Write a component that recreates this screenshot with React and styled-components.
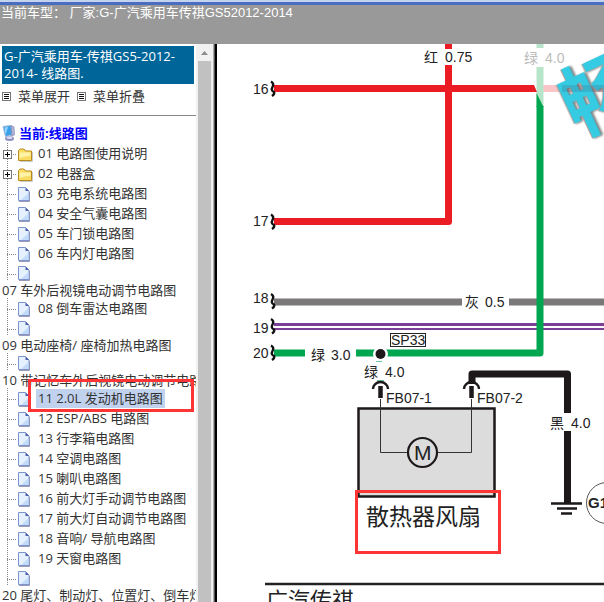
import { useState } from 'react';
import styled, { createGlobalStyle } from 'styled-components';

const uiFont = '"Open Sans", "Noto Sans CJK SC", sans-serif';
const arialFont = '"Liberation Sans", "Noto Sans CJK SC", sans-serif';

const menu = [
  { text: '01 电路图使用说明', folder: true },
  { text: '02 电器盒', folder: true },
  { text: '03 充电系统电路图' },
  { text: '04 安全气囊电路图' },
  { text: '05 车门锁电路图' },
  { text: '06 车内灯电路图' },
  { text: '07 车外后视镜电动调节电路图', wrapped: true },
  { text: '08 倒车雷达电路图' },
  { text: '09 电动座椅/ 座椅加热电路图', wrapped: true },
  { text: '10 带记忆车外后视镜电动调节电路图', wrapped: true },
  { text: '11 2.0L 发动机电路图', marked: true },
  { text: '12 ESP/ABS 电路图' },
  { text: '13 行李箱电路图' },
  { text: '14 空调电路图' },
  { text: '15 喇叭电路图' },
  { text: '16 前大灯手动调节电路图' },
  { text: '17 前大灯自动调节电路图' },
  { text: '18 音响/ 导航电路图' },
  { text: '19 天窗电路图' },
  { text: '20 尾灯、制动灯、位置灯、倒车灯电路图', wrapped: true },
];

export default function App() {
  const [selected, setSelected] = useState(10);

  return (
    <Page>
      <GlobalStyle />
      <TopBar>当前车型： 厂家:G-广汽乘用车传祺GS52012-2014</TopBar>
      <Frames>
        <Sidebar>
          <Title>G-广汽乘用车-传祺GS5-2012-2014- 线路图.</Title>
          <Tools>
            <ListIcon />
            <ToolButton type="button">菜单展开</ToolButton>
            <ListIcon />
            <ToolButton type="button">菜单折叠</ToolButton>
          </Tools>
          <Root>
            <ComputerIcon />
            <span>当前:线路图</span>
          </Root>
          <Tree>
            {menu.map((item, i) => (
              <Item key={item.text}>
                <Branch $short={item.wrapped}>
                  {item.folder && <Expand type="button" aria-label={'展开 ' + item.text}><PlusIcon /></Expand>}
                </Branch>
                {item.folder ? <FolderIcon /> : <PageIcon />}
                <ItemLink
                  href={'#' + (i + 1)}
                  $wrapped={item.wrapped}
                  $selected={selected === i}
                  onClick={() => setSelected(i)}
                >
                  {item.text}
                </ItemLink>
                {item.marked && <Mark />}
              </Item>
            ))}
          </Tree>
        </Sidebar>
        <ScrollBar>
          <svg width="7" height="4" viewBox="0 0 7 4"><path d="M0 4 3.5 0 7 4z" fill="#8b8b8b" /></svg>
          <Thumb />
        </ScrollBar>
        <Divider />
        <Main>
          <Diagram />
        </Main>
      </Frames>
    </Page>
  );
}

function ListIcon() {
  return (
    <svg width="9" height="9" viewBox="0 0 9 9" shapeRendering="crispEdges">
      <rect x=".5" y=".5" width="8" height="8" fill="#fff" stroke="#777" />
      <path d="M2 2.5h5M2 4.5h5M2 6.5h5" stroke="#111" />
    </svg>
  );
}

function PlusIcon() {
  return (
    <svg width="9" height="9" viewBox="0 0 9 9" shapeRendering="crispEdges">
      <rect x=".5" y=".5" width="8" height="8" fill="#fff" stroke="#777" />
      <path d="M2 4.5h5M4.5 2v5" stroke="#000" />
    </svg>
  );
}

function ComputerIcon() {
  return (
    <svg width="16" height="18" viewBox="0 0 16 18">
      <ellipse cx="8.5" cy="14.5" rx="4.5" ry="2.5" fill="#8d8fc0" />
      <ellipse cx="8.5" cy="13.7" rx="3" ry="1.4" fill="#dcdcf0" />
      <path d="M2 2.5 10 1.5 11 11 4.5 12.5z" fill="#3aa0e8" stroke="#9db6d8" />
      <path d="M3.4 3.6 7 3 5 9.8 4.4 10z" fill="#8fd4ff" />
      <path d="M10 1.5 13 3 13.5 10.8 11 12z" fill="#b5b8d8" stroke="#7276a8" strokeWidth=".6" />
    </svg>
  );
}

function FolderIcon() {
  return (
    <svg width="18" height="18" viewBox="0 0 18 18">
      <path d="M3 17.5h12.500V8" fill="none" stroke="#c9c9c9" />
      <path d="M1.500 16.500V6.500L3 5h4l1.500 2h6v9.500z" fill="#fbdc62" stroke="#b98a1e" />
      <path d="M2.500 8.500h11v3.500q-6 0-11 2z" fill="#fff3a8" />
    </svg>
  );
}

function PageIcon() {
  return (
    <svg width="18" height="18" viewBox="0 0 18 18">
      <path d="M2 17.500h10.500V8" fill="none" stroke="#9a9ab4" />
      <path d="M1.500 3.500h7l3.500 3.500v9.500H1.500z" fill="#e6f1ff" stroke="#7d93cf" />
      <path d="M11.500 9v7H4z" fill="#c3dbfb" />
      <path d="M8.500 3.500V7H12z" fill="#4d62ad" />
    </svg>
  );
}

function Break({ y }) {
  return <path d={`M271 ${y - 7}q3.500 2 1.500 5.500t1.500 5q1 2-2 4`} fill="none" stroke="#111" strokeWidth="2.400" />;
}

function Connector({ x }) {
  return (
    <>
      <path d={`M${x - 7.5} 389a7.500 7 0 0 1 15 0`} fill="none" stroke="#1d191a" strokeWidth="2.400" />
      <path d={`M${x} 386v12`} stroke="#1d191a" strokeWidth="4.500" />
    </>
  );
}

// wiring of the radiator fan, in sheet coordinates
function Diagram() {
  return (
    <Sheet viewBox="217 44 387 558" preserveAspectRatio="xMinYMin slice" role="img" aria-label="散热器风扇电路图">
      <g fill="none" strokeWidth="7">
        <path d="M543 88.500h61" stroke="#fbc4c6" />
        <path d="M540 44v4M540 67v40" stroke="#b7e5ca" />
        <path d="M274 85H534l3 7H274z" fill="#ec1c24" stroke="none" />
        <path d="M448.500 44v5M448.500 65v156.500H274" stroke="#ec1c24" strokeLinejoin="round" />
        <path d="M274 302h188M509 302h95" stroke="#7b7879" />
        <path d="M274 324.500h330" stroke="#7b3f98" strokeWidth="3" />
        <path d="M274 329h330" stroke="#7b3f98" strokeWidth="2" />
        <path d="M540 106v247H356M305 353h-31" stroke="#00a650" strokeLinejoin="round" />
        <path d="M536.500 93 543.500 107H536.500z" fill="#00a650" stroke="none" />
        <path d="M472 384v-10h95.500v39M567.500 431v72" stroke="#1d191a" strokeLinejoin="round" />
      </g>
      <Break y={88.5} />
      <Break y={221.5} />
      <Break y={301} />
      <Break y={326} />
      <Break y={352.5} />
      <circle cx="380.500" cy="354" r="7.500" fill="#fff" />
      <circle cx="380.500" cy="354" r="5" fill="#1d191a" />
      <path d="M376 361.500h6M377 380.500h7" stroke="#6fc3a0" />
      <rect x="358.500" y="408.500" width="136" height="88" fill="#dcdcdc" stroke="#1d191a" strokeWidth="2.500" />
      <path d="M380.500 399v53.500h91V399" fill="none" stroke="#333" />
      <circle cx="422.500" cy="452.500" r="14.500" fill="#dcdcdc" stroke="#1d191a" strokeWidth="2.200" />
      <Connector x={380.5} />
      <Connector x={471.5} />
      <path d="M551 503.500h31M557 508.500h20M561 513.500h11" stroke="#1d191a" strokeWidth="2.500" />
      <circle cx="607" cy="503" r="20.500" fill="none" stroke="#555" />
      <rect x="390.500" y="333.500" width="35" height="13" fill="#fff" stroke="#222" />
      <path d="M265 584h339" stroke="#222" strokeWidth="2.500" />
      <Label x="253" y="94">16</Label>
      <Label x="253" y="226">17</Label>
      <Label x="253" y="303">18</Label>
      <Label x="253" y="333">19</Label>
      <Label x="253" y="358">20</Label>
      <Label x="424" y="62">红</Label>
      <Label x="445" y="62">0.75</Label>
      <Label x="524" y="63" $faded>绿</Label>
      <Label x="545" y="63" $faded>4.0</Label>
      <Label x="465" y="307">灰</Label>
      <Label x="485" y="307">0.5</Label>
      <Label x="311" y="360">绿</Label>
      <Label x="331" y="360">3.0</Label>
      <Label x="364" y="377">绿</Label>
      <Label x="385" y="377">4.0</Label>
      <Label x="550" y="428">黑</Label>
      <Label x="571" y="428">4.0</Label>
      <Label x="391" y="345">SP33</Label>
      <Label x="386" y="403">FB07-1</Label>
      <Label x="477" y="403">FB07-2</Label>
      <Label x="414" y="460" $size={21}>M</Label>
      <Label x="588" y="508" $size={15} $bold>G1</Label>
      <Label x="366" y="525" $size={23}>散热器风扇</Label>
      <Label x="266" y="608" $size={22}>广汽传祺</Label>
      <Watermark x="577" y="137" transform="rotate(-25 577 137)">畅</Watermark>
      <path d="M562 88.500h42" stroke="#44506a" strokeOpacity=".2" strokeWidth="7" />
      <rect x="356.500" y="491.500" width="143" height="61" fill="none" stroke="#ff3535" strokeWidth="3" />
    </Sheet>
  );
}

const GlobalStyle = createGlobalStyle`
  body {
    margin: 0;
    background: #fff;
  }

  * {
    box-sizing: border-box;
  }
`;

const Page = styled.div`
  display: flex;
  flex-direction: column;
  height: 100vh;
  overflow: hidden;
`;

const TopBar = styled.header`
  flex: none;
  height: 44px;
  padding: 5px 0 0 1px;
  background: linear-gradient(#c4d4ee 0 2px, #4a6dc0 2px 5px, #999 5px);
  color: #fff;
  font: 13px/16px ${arialFont};
  white-space: nowrap;
`;

const Frames = styled.div`
  display: flex;
  flex: 1;
  min-height: 0;
`;

const Sidebar = styled.nav`
  flex: none;
  width: 196px;
  padding-top: 2px;
  overflow: hidden;
  color: #333;
  font: 13px/17px ${uiFont};
  white-space: nowrap;
`;

const Title = styled.div`
  margin: 0 2px;
  padding: 2px;
  background: #006699;
  color: #fff;
  white-space: normal;
`;

const Tools = styled.div`
  display: flex;
  align-items: center;
  gap: 7px;
  height: 32px;
  padding: 0 2px 6px;
  border-bottom: 1px solid #888;
`;

const ToolButton = styled.button`
  padding: 0;
  border: 0;
  background: none;
  color: inherit;
  font: inherit;
`;

const Root = styled.div`
  display: flex;
  align-items: center;
  gap: 2px;
  height: 27px;
  padding: 7px 0 0 1px;
  color: #0000ff;
  font-weight: bold;
`;

const Tree = styled.ul`
  margin: 0;
  padding: 0;
  list-style: none;
`;

const Item = styled.li`
  position: relative;
  display: flex;
  flex-wrap: wrap;
  align-items: center;
`;

const Branch = styled.span`
  display: flex;
  align-items: center;
  width: 10px;
  height: ${p => (p.$short ? 18 : 20)}px;
  margin-left: 7px;
  padding-top: 2px;
  background:
    repeating-linear-gradient(#888 0 1px, transparent 1px 2px) 0 0 / 1px 100% no-repeat,
    repeating-linear-gradient(90deg, #888 0 1px, transparent 1px 2px) 0 11px / 100% 1px no-repeat;
`;

const Expand = styled.button`
  display: flex;
  flex: none;
  margin-left: -4px;
  padding: 0;
  border: 0;
  background: none;
`;

const ItemLink = styled.a`
  flex: ${p => (p.$wrapped ? '0 0 100%' : 'none')};
  margin-left: ${p => (p.$wrapped ? 0 : 1)}px;
  padding: ${p => (p.$wrapped ? '2px 2px 0' : '0 2px')};
  background: ${p => (p.$selected ? '#c1d2ee' : 'none')};
  line-height: ${p => (p.$wrapped ? 15 : 19)}px;
  color: inherit;
  text-decoration: none;
`;

const Mark = styled.span`
  position: absolute;
  top: -9px;
  left: 28px;
  width: 166px;
  height: 33px;
  border: 3px solid #ff3535;
  pointer-events: none;
`;

const ScrollBar = styled.div`
  display: flex;
  flex: none;
  flex-direction: column;
  align-items: center;
  gap: 6px;
  width: 17px;
  padding: 7px 2px 0;
  background: #f1f1f1;
`;

const Thumb = styled.div`
  flex: 1;
  width: 100%;
  background: #c1c1c1;
`;

const Divider = styled.div`
  flex: none;
  width: 4px;
  border-right: 2px solid #000;
  border-left: 1px solid #aaa;
  background: #555;
`;

const Main = styled.main`
  flex: 1;
  min-width: 0;
  overflow: hidden;
`;

const Sheet = styled.svg`
  display: block;
  width: 100%;
  height: 100%;
`;

const Label = styled.text`
  fill: ${p => (p.$faded ? '#bbb' : '#222')};
  font-family: ${arialFont};
  font-size: ${p => p.$size || 14}px;
  font-weight: ${p => (p.$bold ? 'bold' : 'normal')};
`;

const Watermark = styled.text`
  fill: #35cbe3;
  font-family: "Noto Sans CJK SC", sans-serif;
  font-size: 80px;
  font-weight: bold;
  filter: drop-shadow(-1px 0 0 #b59a94) drop-shadow(2px 1px 1px #777);
`;
